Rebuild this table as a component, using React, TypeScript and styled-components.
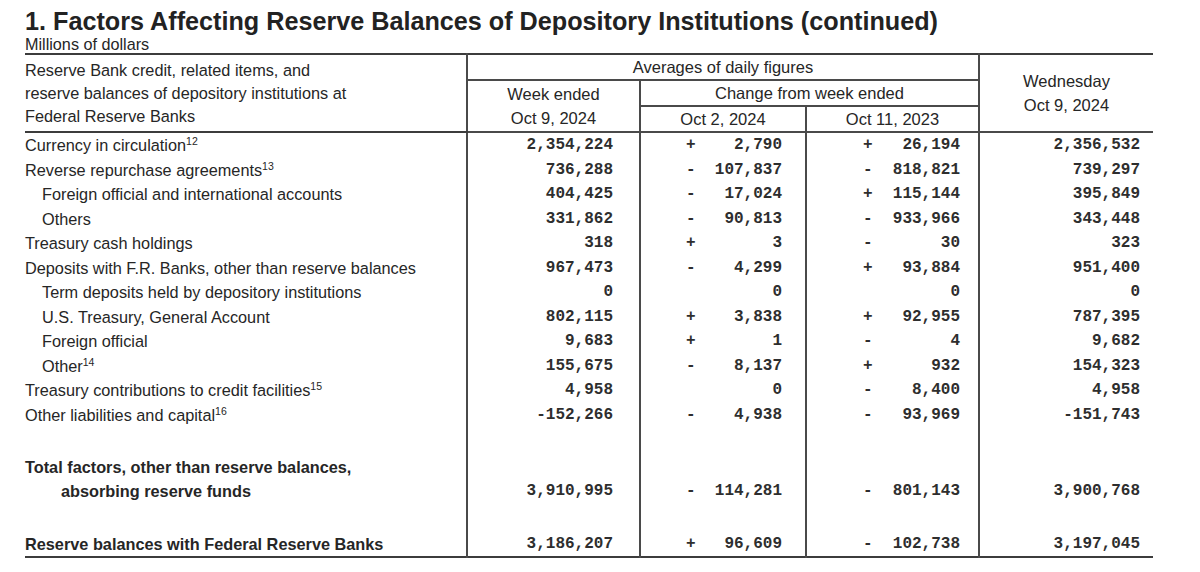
import styled, { createGlobalStyle } from "styled-components";

const GlobalStyle = createGlobalStyle`
  html, body {
    margin: 0;
    padding: 0;
    background: #ffffff;
  }
  body {
    font-family: "Liberation Sans", Arial, sans-serif;
    color: #262626;
  }
`

const Page = styled.div`
  padding: 6px 0 0 25px;
  width: 1128px;
`

const Title = styled.h1`
  margin: 0;
  font-size: 25.2px;
  font-weight: bold;
  line-height: 30px;
  color: #222;
`

const Units = styled.div`
  font-size: 16.2px;
  line-height: 16px;
  height: 17px;
`

const Table = styled.table`
  width: 1128px;
  border-collapse: collapse;
  table-layout: fixed;
  border-top: 2px solid #3c3c3c;
  border-bottom: 2px solid #3c3c3c;
`

const HeadCell = styled.th<{ divider?: boolean, underline?: boolean }>`
  font-weight: normal;
  font-size: 16.5px;
  text-align: center;
  padding: 0;
  line-height: 24px;
  border-left: ${props => (props.divider ? '2px solid #4a4a4a' : 'none')};
  border-bottom: ${props => (props.underline ? '2px solid #4a4a4a' : 'none')};
`

const LabelHead = styled.th`
  font-weight: normal;
  font-size: 16.3px;
  text-align: left;
  vertical-align: middle;
  line-height: 23px;
  padding: 0;
  border-bottom: 2px solid #3c3c3c;
`

const Row = styled.tr<{ height: number }>`
  height: ${props => props.height}px;
`

const Label = styled.td<{ indent?: boolean, bold?: boolean }>`
  font-size: 16.3px;
  padding: 0 0 0 ${props => (props.indent ? '17px' : '0')};
  font-weight: ${props => (props.bold ? 'bold' : 'normal')};
  white-space: nowrap;
  vertical-align: bottom;
  line-height: 24px;
`

const Sup = styled.sup`
  font-size: 10.5px;
  line-height: 0;
  vertical-align: 6px;
`

const SubLine = styled.div`
  padding-left: 36px;
`

const Num = styled.td<{ pad: number }>`
  font-family: "Liberation Mono", "DejaVu Sans Mono", monospace;
  font-size: 16px;
  font-weight: bold;
  color: #2e2e2e;
  text-align: right;
  padding: 0 ${props => props.pad}px 0 0;
  vertical-align: bottom;
  line-height: 24px;
  border-left: 2px solid #4a4a4a;
  white-space: nowrap;
`

const Change = styled.td<{ signAt: number, pad: number }>`
  font-family: "Liberation Mono", "DejaVu Sans Mono", monospace;
  font-size: 16px;
  font-weight: bold;
  color: #2e2e2e;
  padding: 0 ${props => props.pad}px 0 ${props => props.signAt}px;
  vertical-align: bottom;
  line-height: 24px;
  border-left: 2px solid #4a4a4a;
  white-space: nowrap;
`

const ChangeInner = styled.div`
  display: flex;
  justify-content: space-between;
`

const LastCell = styled(Num)`
  border-left: 2px solid #4a4a4a;
`

type Delta = [string, string]

type Line = {
  label: string,
  sup?: string,
  indent?: boolean,
  week: string,
  c1: Delta,
  c2: Delta,
  wed: string,
}

const lines: Line[] = [
  { label: 'Currency in circulation', sup: '12', week: '2,354,224', c1: ['+', '2,790'], c2: ['+', '26,194'], wed: '2,356,532' },
  { label: 'Reverse repurchase agreements', sup: '13', week: '736,288', c1: ['-', '107,837'], c2: ['-', '818,821'], wed: '739,297' },
  { label: 'Foreign official and international accounts', indent: true, week: '404,425', c1: ['-', '17,024'], c2: ['+', '115,144'], wed: '395,849' },
  { label: 'Others', indent: true, week: '331,862', c1: ['-', '90,813'], c2: ['-', '933,966'], wed: '343,448' },
  { label: 'Treasury cash holdings', week: '318', c1: ['+', '3'], c2: ['-', '30'], wed: '323' },
  { label: 'Deposits with F.R. Banks, other than reserve balances', week: '967,473', c1: ['-', '4,299'], c2: ['+', '93,884'], wed: '951,400' },
  { label: 'Term deposits held by depository institutions', indent: true, week: '0', c1: ['', '0'], c2: ['', '0'], wed: '0' },
  { label: 'U.S. Treasury, General Account', indent: true, week: '802,115', c1: ['+', '3,838'], c2: ['+', '92,955'], wed: '787,395' },
  { label: 'Foreign official', indent: true, week: '9,683', c1: ['+', '1'], c2: ['-', '4'], wed: '9,682' },
  { label: 'Other', sup: '14', indent: true, week: '155,675', c1: ['-', '8,137'], c2: ['+', '932'], wed: '154,323' },
  { label: 'Treasury contributions to credit facilities', sup: '15', week: '4,958', c1: ['', '0'], c2: ['-', '8,400'], wed: '4,958' },
  { label: 'Other liabilities and capital', sup: '16', week: '-152,266', c1: ['-', '4,938'], c2: ['-', '93,969'], wed: '-151,743' },
]

const Values = ({ week, c1, c2, wed }: { week: string, c1: Delta, c2: Delta, wed: string }) => (
  <>
    <Num pad={26}>{week}</Num>
    <Change signAt={45} pad={23}>
      <ChangeInner><span>{c1[0]}</span><span>{c1[1]}</span></ChangeInner>
    </Change>
    <Change signAt={56} pad={18}>
      <ChangeInner><span>{c2[0]}</span><span>{c2[1]}</span></ChangeInner>
    </Change>
    <LastCell pad={13}>{wed}</LastCell>
  </>
)

export default function App() {
  return (
    <Page>
      <GlobalStyle />
      <Title>1. Factors Affecting Reserve Balances of Depository Institutions (continued)</Title>
      <Units>Millions of dollars</Units>
      <Table>
        <colgroup>
          <col style={{ width: 442 }} />
          <col style={{ width: 173 }} />
          <col style={{ width: 166 }} />
          <col style={{ width: 173 }} />
          <col style={{ width: 174 }} />
        </colgroup>
        <thead>
          <Row height={26}>
            <LabelHead rowSpan={3}>
              Reserve Bank credit, related items, and<br />
              reserve balances of depository institutions at<br />
              Federal Reserve Banks
            </LabelHead>
            <HeadCell colSpan={3} divider underline>Averages of daily figures</HeadCell>
            <HeadCell rowSpan={3} divider underline>Wednesday<br />Oct 9, 2024</HeadCell>
          </Row>
          <Row height={25}>
            <HeadCell rowSpan={2} divider underline>Week ended<br />Oct 9, 2024</HeadCell>
            <HeadCell colSpan={2} divider underline>Change from week ended</HeadCell>
          </Row>
          <Row height={25}>
            <HeadCell divider underline>Oct 2, 2024</HeadCell>
            <HeadCell divider underline>Oct 11, 2023</HeadCell>
          </Row>
        </thead>
        <tbody>
          {lines.map(line => (
            <Row height={24.5} key={line.label}>
              <Label indent={line.indent}>
                {line.label}{line.sup && <Sup>{line.sup}</Sup>}
              </Label>
              <Values week={line.week} c1={line.c1} c2={line.c2} wed={line.wed} />
            </Row>
          ))}
          <Row height={27}>
            <Label />
            <Num pad={0} />
            <Change signAt={0} pad={0} />
            <Change signAt={0} pad={0} />
            <LastCell pad={0} />
          </Row>
          <Row height={49}>
            <Label bold>
              Total factors, other than reserve balances,
              <SubLine>absorbing reserve funds</SubLine>
            </Label>
            <Values week="3,910,995" c1={['-', '114,281']} c2={['-', '801,143']} wed="3,900,768" />
          </Row>
          <Row height={29}>
            <Label />
            <Num pad={0} />
            <Change signAt={0} pad={0} />
            <Change signAt={0} pad={0} />
            <LastCell pad={0} />
          </Row>
          <Row height={23}>
            <Label bold>Reserve balances with Federal Reserve Banks</Label>
            <Values week="3,186,207" c1={['+', '96,609']} c2={['-', '102,738']} wed="3,197,045" />
          </Row>
        </tbody>
      </Table>
    </Page>
  );
}
